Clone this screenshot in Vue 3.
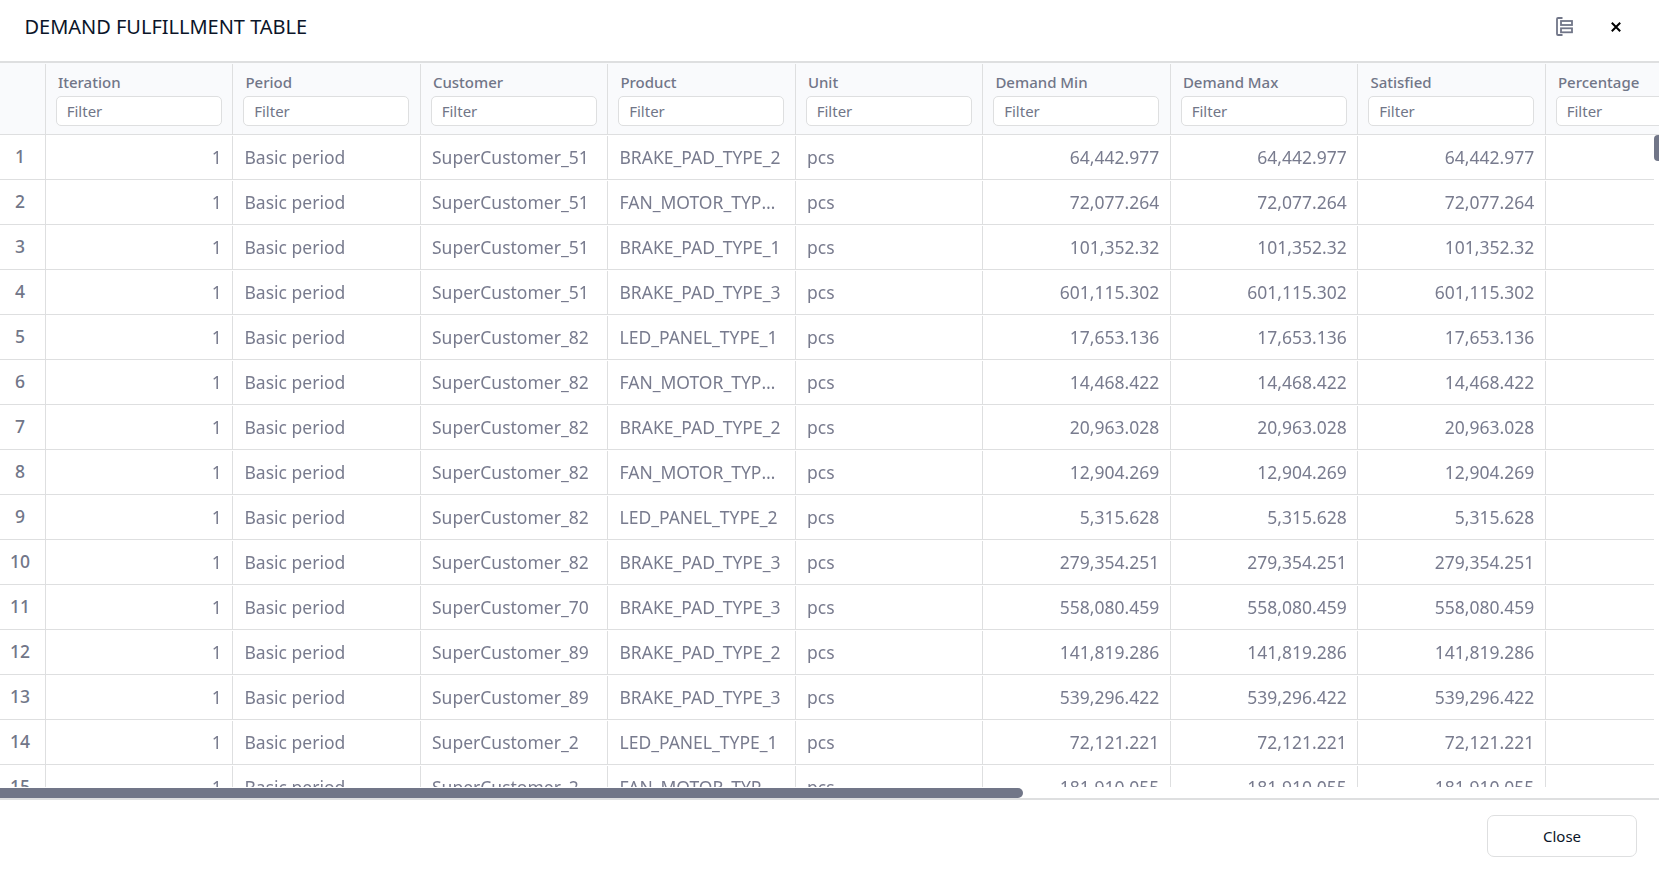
<script setup>
const columns = ['Iteration', 'Period', 'Customer', 'Product', 'Unit', 'Demand Min', 'Demand Max', 'Satisfied', 'Percentage']
const source = [
  ['51', 'BRAKE_PAD_TYPE_2', '64,442.977'],
  ['51', 'FAN_MOTOR_TYPE_1', '72,077.264'],
  ['51', 'BRAKE_PAD_TYPE_1', '101,352.32'],
  ['51', 'BRAKE_PAD_TYPE_3', '601,115.302'],
  ['82', 'LED_PANEL_TYPE_1', '17,653.136'],
  ['82', 'FAN_MOTOR_TYPE_1', '14,468.422'],
  ['82', 'BRAKE_PAD_TYPE_2', '20,963.028'],
  ['82', 'FAN_MOTOR_TYPE_2', '12,904.269'],
  ['82', 'LED_PANEL_TYPE_2', '5,315.628'],
  ['82', 'BRAKE_PAD_TYPE_3', '279,354.251'],
  ['70', 'BRAKE_PAD_TYPE_3', '558,080.459'],
  ['89', 'BRAKE_PAD_TYPE_2', '141,819.286'],
  ['89', 'BRAKE_PAD_TYPE_3', '539,296.422'],
  ['2', 'LED_PANEL_TYPE_1', '72,121.221'],
  ['2', 'FAN_MOTOR_TYPE_1', '181,910.055'],
]
const rows = source.map(([c, p, v]) => ['1', 'Basic period', 'SuperCustomer_' + c, p, 'pcs', v, v, v, ''])
const numeric = (i) => i === 0 || i > 4
</script>

<template>
  <div class="dialog">
    <header class="title-bar">
      <h1>DEMAND FULFILLMENT TABLE</h1>
      <div class="actions">
        <svg class="icon-group" width="18" height="21" viewBox="0 0 18 21">
          <path d="M7.5 2H3Q2 2 2 3V18Q2 19 3 19H7.5" />
          <rect x="6" y="5" width="11" height="4" />
          <rect x="6" y="12.3" width="11" height="4" />
        </svg>
        <svg class="icon-x" width="10" height="10" viewBox="0 0 10 10">
          <path d="M0.8 0.8L9.2 9.2M9.2 0.8L0.8 9.2" />
        </svg>
      </div>
    </header>
    <main class="grid">
      <div class="head">
        <div class="corner"></div>
        <div v-for="c in columns" :key="c" class="head-cell">
          <span class="label">{{ c }}</span>
          <input class="filter" type="text" placeholder="Filter" />
        </div>
      </div>
      <div class="body">
        <div class="viewport">
          <div class="numbers">
            <div v-for="(r, i) in rows" :key="i" class="number">{{ i + 1 }}</div>
          </div>
          <div class="cells">
            <div v-for="(r, i) in rows" :key="i" class="row">
              <div v-for="(v, j) in r" :key="j" class="cell" :class="{ num: numeric(j) }">{{ v }}</div>
            </div>
          </div>
        </div>
        <div class="vtrack"><div class="vthumb"></div></div>
      </div>
      <div class="htrack"><div class="hthumb"></div></div>
    </main>
    <footer class="footer">
      <button class="close">Close</button>
    </footer>
  </div>
</template>

<style>
body { background: #fff; }
</style>
<style scoped>
* { box-sizing: border-box; }
.dialog { width: 1659px; height: 870px; display: flex; flex-direction: column; overflow: hidden; font-family: "Noto Sans", sans-serif; color: #717688; }
.title-bar { height: 63px; flex: none; display: flex; justify-content: space-between; padding: 0 38px 0 24.5px; border-bottom: 2px solid #dedfe0; }
h1 { margin: 12px 0 0; font-size: 20px; line-height: 30px; font-weight: 400; letter-spacing: -0.02px; color: #0b1529; }
.actions { display: flex; gap: 38px; align-items: center; height: 53px; }
svg { fill: none; display: block; }
.icon-group { stroke: #717688; stroke-width: 1.8; }
.icon-x { stroke: #000; stroke-width: 2; }
.grid { height: 735px; flex: none; overflow: hidden; }
.head { height: 72px; display: flex; background: #f9fafc; border-bottom: 1px solid #dedfe0; padding-top: 1px; }
.corner { width: 45.7px; flex: none; border-right: 1px solid #dedfe0; }
.head-cell { width: 187.5px; flex: none; border-right: 1px solid #dedfe0; padding: 6px 10px 0; }
.label { display: block; padding-left: 2.2px; font-size: 15px; line-height: 24px; font-weight: 500; }
.filter { display: block; width: 166px; height: 30px; margin-top: 2px; padding: 0 10px; border: 1px solid #dedfe0; border-radius: 5px; background: #fff; font: 400 15px "Noto Sans", sans-serif; color: #717688; }
.filter::placeholder { color: #717688; opacity: 1; }
.body { height: 652px; display: flex; overflow: hidden; }
.viewport { width: 1654px; flex: none; display: flex; overflow: hidden; }
.numbers { width: 46px; flex: none; border-right: 1px solid #dedfe0; }
.number { height: 45px; border-bottom: 1px solid #dedfe0; text-align: center; padding-right: 5px; font-size: 17.5px; line-height: 43px; font-weight: 500; }
.cells { flex: none; will-change: transform; color: #787b8e; }
.row { display: flex; height: 45px; border-bottom: 1px solid #dedfe0; padding-top: 1px; }
.cell { width: 187.5px; flex: none; border-right: 1px solid #dedfe0; padding: 0 10.4px 0 11.3px; font-size: 17.5px; line-height: 43px; white-space: nowrap; overflow: hidden; text-overflow: ellipsis; }
.cell:first-child { width: 187.2px; }
.num { text-align: right; }
.vtrack { width: 5px; flex: none; }
.vthumb { width: 10px; height: 26px; border-radius: 4px; background: #717688; }
.htrack { height: 11px; padding-top: 1px; }
.hthumb { width: 1023px; height: 10px; border-radius: 0 5px 5px 0; background: #717688; }
.footer { flex: 1; border-top: 2px solid #dedfe0; display: flex; justify-content: flex-end; padding: 15px 22px 0 0; }
.close { width: 150px; height: 42px; border: 1px solid #dedfe0; border-radius: 7px; background: #fff; font: 400 15px "Noto Sans", sans-serif; color: #0b1529; padding: 0; }
</style>
